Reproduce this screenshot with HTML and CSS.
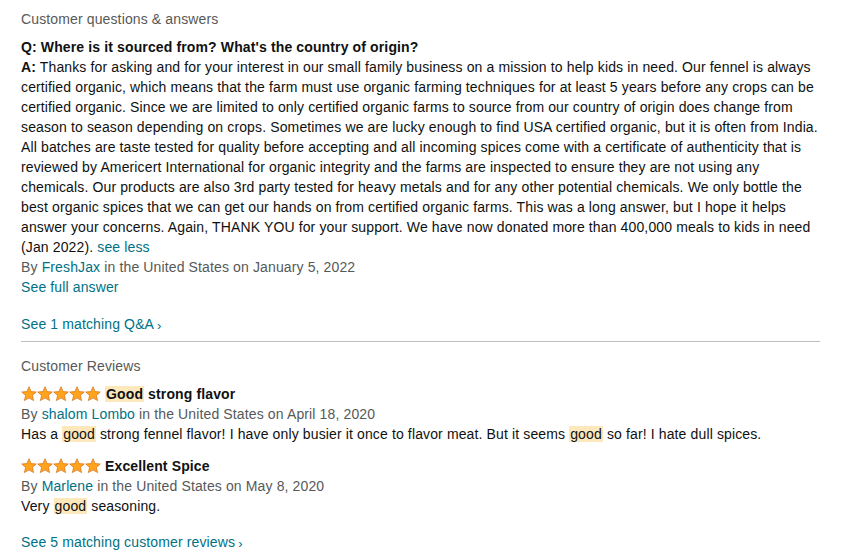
FILE: index.html
```html
<!DOCTYPE html>
<html>
<head>
<meta charset="utf-8">
<link rel="stylesheet" href="styles.css">
</head>
<body>
<div class="page">
  <section class="qa">
    <h3 class="section-title">Customer questions &amp; answers</h3>
    <div class="question">Q: Where is it sourced from? What's the country of origin?</div>
    <p class="answer"><b>A:</b> Thanks for asking and for your interest in our small family business on a mission to help kids in need. Our fennel is always certified organic, which means that the farm must use organic farming techniques for at least 5 years before any crops can be certified organic. Since we are limited to only certified organic farms to source from our country of origin does change from season to season depending on crops. Sometimes we are lucky enough to find USA certified organic, but it is often from India. All batches are taste tested for quality before accepting and all incoming spices come with a certificate of authenticity that is reviewed by Americert International for organic integrity and the farms are inspected to ensure they are not using any chemicals. Our products are also 3rd party tested for heavy metals and for any other potential chemicals. We only bottle the best organic spices that we can get our hands on from certified organic farms. This was a long answer, but I hope it helps answer your concerns. Again, THANK YOU for your support. We have now donated more than 400,000 meals to kids in need (Jan 2022). <a class="link" href="#">see less</a></p>
    <div class="meta">By <a class="link" href="#">FreshJax</a> in the United States on January 5, 2022</div>
    <div><a class="link" href="#">See full answer</a></div>
    <div class="more"><a class="link" href="#">See 1 matching Q&amp;A<span class="chev">›</span></a></div>
  </section>
  <hr class="divider">
  <section class="reviews">
    <h3 class="section-title">Customer Reviews</h3>
    <div class="review">
      <div class="review-title">
        <span class="stars">
          <svg viewBox="0 0 80 16" width="80" height="16"><defs><polygon id="s" points="8,0.8 10.1,5.6 15.3,6 11.4,9.4 12.6,14.6 8,11.9 3.4,14.6 4.6,9.4 0.7,6 5.9,5.6"/></defs><use href="#s" x="0"/><use href="#s" x="16"/><use href="#s" x="32"/><use href="#s" x="48"/><use href="#s" x="64"/></svg>
        </span>
        <b><mark class="hl">Good</mark> strong flavor</b>
      </div>
      <div class="meta">By <a class="link" href="#">shalom Lombo</a> in the United States on April 18, 2020</div>
      <div class="body">Has a <mark class="hl">good</mark> strong fennel flavor! I have only busier it once to flavor meat. But it seems <mark class="hl">good</mark> so far! I hate dull spices.</div>
    </div>
    <div class="review">
      <div class="review-title">
        <span class="stars">
          <svg viewBox="0 0 80 16" width="80" height="16"><use href="#s" x="0"/><use href="#s" x="16"/><use href="#s" x="32"/><use href="#s" x="48"/><use href="#s" x="64"/></svg>
        </span>
        <b>Excellent Spice</b>
      </div>
      <div class="meta">By <a class="link" href="#">Marlene</a> in the United States on May 8, 2020</div>
      <div class="body">Very <mark class="hl">good</mark> seasoning.</div>
    </div>
    <div class="more"><a class="link" href="#">See 5 matching customer reviews<span class="chev">›</span></a></div>
  </section>
</div>
</body>
</html>
```
FILE: styles.css
```css
html, body {
  margin: 0;
  padding: 0;
  background: #fff;
}
body {
  font-family: "Liberation Sans", Arial, sans-serif;
  font-size: 14px;
  line-height: 20px;
  color: #0f1111;
  letter-spacing: 0.13px;
}
.page {
  width: 801px;
  padding: 9px 0 0 21px;
}
.section-title {
  margin: 0 0 8px;
  font-size: 14px;
  font-weight: 400;
  color: #565959;
  line-height: 20px;
}
.question {
  font-weight: 700;
}
.answer {
  margin: 0;
}
.meta {
  color: #565959;
}
.link {
  color: #007185;
  text-decoration: none;
}
.more {
  margin-top: 17px;
}
.chev {
  font-size: 13px;
  margin-left: 3px;
  position: relative;
  top: 1px;
}
.divider {
  border: 0;
  border-top: 1px solid #bbbfbf;
  margin: 6px 2px 14px 0;
  height: 0;
}
.review {
  margin-bottom: 12px;
}
.review-title {
  display: flex;
  align-items: center;
  gap: 4px;
  height: 20px;
}
.review-title b {
  font-weight: 700;
}
.stars svg {
  display: block;
  fill: #ffa41c;
  stroke: #de7921;
  stroke-width: 0.8;
}
.hl {
  background: #fde8bc;
  color: inherit;
  padding: 0 1px;
}
.reviews .more {
  margin-top: 16px;
}
```
